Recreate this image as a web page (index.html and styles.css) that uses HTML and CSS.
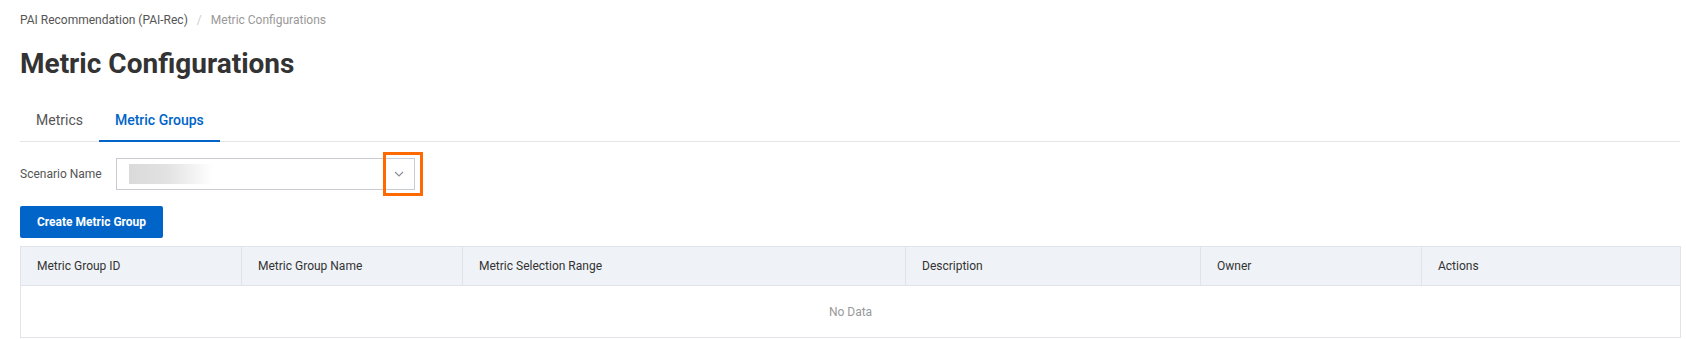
FILE: index.html
```html
<!DOCTYPE html>
<html>
<head>
<meta charset="utf-8">
<link rel="stylesheet" href="styles.css">
</head>
<body>
<div class="page">
  <nav class="breadcrumb">
    <span class="crumb">PAI Recommendation (PAI-Rec)</span>
    <span class="sep">/</span>
    <span class="crumb current">Metric Configurations</span>
  </nav>
  <h1 class="title">Metric Configurations</h1>
  <div class="tabs">
    <div class="tab">Metrics</div>
    <div class="tab active">Metric Groups</div>
  </div>
  <div class="filter">
    <span class="label">Scenario Name</span>
    <div class="select">
      <span class="blurred"></span>
      <span class="arrow">
        <svg width="10" height="6" viewBox="0 0 10 6"><path d="M1 1 L5 5 L9 1" fill="none" stroke="#8a8f96" stroke-width="1.2"/></svg>
      </span>
      <span class="highlight"></span>
    </div>
  </div>
  <button class="btn">Create Metric Group</button>
  <table class="grid">
    <colgroup>
      <col class="c1"><col class="c2"><col class="c3"><col class="c4"><col class="c5"><col class="c6">
    </colgroup>
    <thead>
      <tr>
        <th>Metric Group ID</th>
        <th>Metric Group Name</th>
        <th>Metric Selection Range</th>
        <th>Description</th>
        <th>Owner</th>
        <th>Actions</th>
      </tr>
    </thead>
    <tbody>
      <tr><td class="empty" colspan="6">No Data</td></tr>
    </tbody>
  </table>
</div>
</body>
</html>
```

FILE: styles.css
```css
html, body {
  margin: 0;
  padding: 0;
  background: #ffffff;
}
body {
  font-family: Roboto, "Noto Sans", Arial, sans-serif;
  color: #333333;
}
.page {
  padding: 0 6px 0 20px;
}
.breadcrumb {
  padding-top: 10px;
  height: 20px;
  line-height: 20px;
  font-size: 12px;
  display: flex;
  align-items: center;
}
.crumb {
  color: #555555;
}
.crumb.current {
  color: #999999;
}
.sep {
  color: #cccccc;
  margin: 0 9px;
}
.title {
  margin: 16px 0 0;
  font-size: 28px;
  line-height: 36px;
  font-weight: 700;
  color: #333333;
}
.tabs {
  margin-top: 20px;
  display: flex;
  border-bottom: 1px solid #e5e5e5;
}
.tab {
  padding: 8px 16px 10px;
  font-size: 14px;
  line-height: 20px;
  color: #555555;
  border-bottom: 2px solid transparent;
  margin-bottom: -1px;
}
.tab.active {
  color: #0064c8;
  font-weight: 500;
  border-bottom-color: #0064c8;
}
.filter {
  margin-top: 16px;
  display: flex;
  align-items: center;
}
.label {
  font-size: 12px;
  color: #555555;
  width: 96px;
}
.select {
  position: relative;
  width: 299px;
  height: 32px;
  box-sizing: border-box;
  border: 1px solid #c8ccd2;
  display: flex;
  align-items: center;
  justify-content: space-between;
  padding: 0 10px 0 12px;
  background: #ffffff;
}
.blurred {
  width: 84px;
  height: 20px;
  background: linear-gradient(to right, #dadada 0%, #e2e2e2 45%, #ffffff 100%);
}
.arrow {
  display: flex;
  width: 10px;
  height: 6px;
}
.highlight {
  position: absolute;
  left: 266px;
  top: -7px;
  width: 40px;
  height: 44px;
  box-sizing: border-box;
  border: 3px solid #ff6a00;
}
.btn {
  display: block;
  margin-top: 16px;
  height: 32px;
  width: 143px;
  border: none;
  border-radius: 2px;
  background: #0064c8;
  color: #ffffff;
  font-family: Roboto, "Noto Sans", Arial, sans-serif;
  font-size: 12px;
  font-weight: 700;
  padding: 0;
}
.grid {
  margin-top: 8px;
  width: 1660px;
  table-layout: fixed;
  border-collapse: collapse;
  font-size: 12px;
}
.c1 { width: 221px; }
.c2 { width: 221px; }
.c3 { width: 443px; }
.c4 { width: 295px; }
.c5 { width: 221px; }
.c6 { width: 259px; }
.grid th {
  height: 38px;
  padding: 0 16px;
  text-align: left;
  font-weight: 400;
  color: #333333;
  background: #eff2f6;
  border: 1px solid #e0e4e9;
}
.grid td.empty {
  height: 51px;
  padding: 0;
  text-align: center;
  color: #999999;
  border: 1px solid #e0e4e9;
  background: #ffffff;
}
```
